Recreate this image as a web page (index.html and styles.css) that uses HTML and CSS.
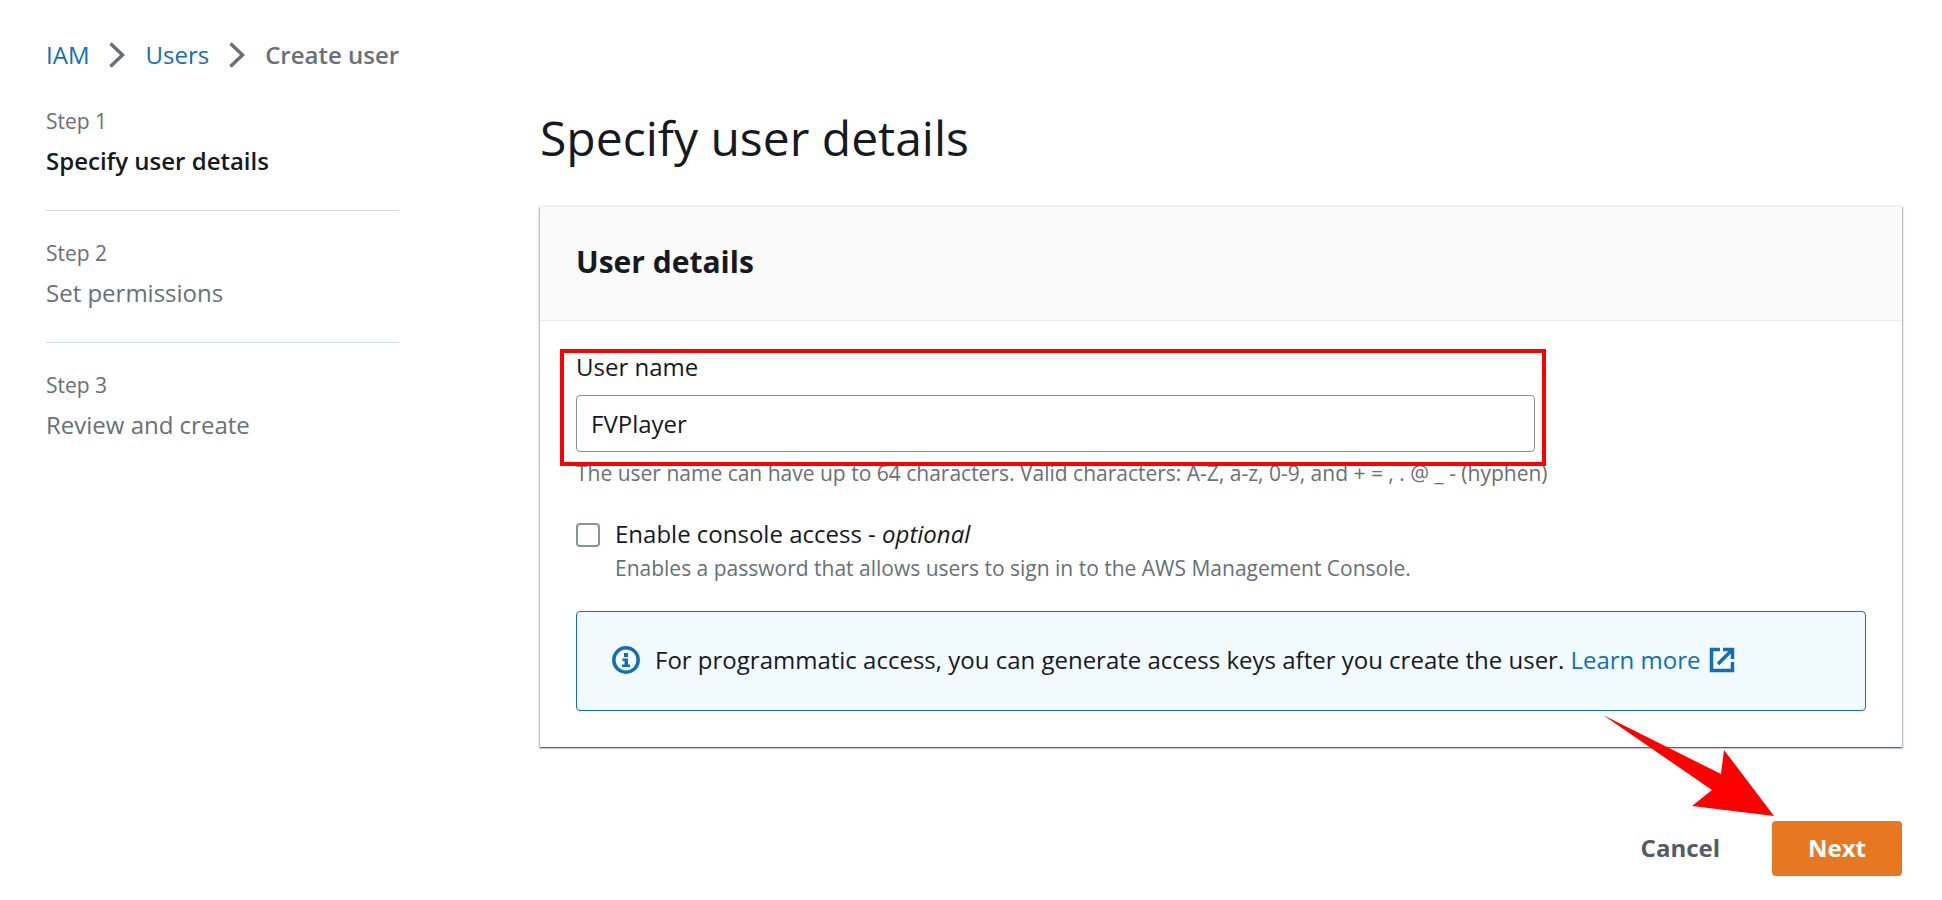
FILE: index.html
```html
<!DOCTYPE html>
<html lang="en">
<head>
    <meta charset="UTF-8">
    <meta name="viewport" content="width=device-width, initial-scale=1.0">
    <title>Create user</title>
    <link rel="stylesheet" href="styles.css">
</head>
<body>
    <nav class="breadcrumb" aria-label="Breadcrumb">
        <a href="#">IAM</a>
        <svg class="chevron" viewBox="0 0 16 26"><path d="M1.5 1.5 L13.5 13 L1.5 24.5"/></svg>
        <a href="#">Users</a>
        <svg class="chevron" viewBox="0 0 16 26"><path d="M1.5 1.5 L13.5 13 L1.5 24.5"/></svg>
        <span class="current">Create user</span>
    </nav>

    <div class="wizard">
        <ol class="steps">
            <li class="step active">
                <span class="step-number">Step 1</span>
                <span class="step-name">Specify user details</span>
            </li>
            <li class="step">
                <span class="step-number">Step 2</span>
                <span class="step-name">Set permissions</span>
            </li>
            <li class="step">
                <span class="step-number">Step 3</span>
                <span class="step-name">Review and create</span>
            </li>
        </ol>

        <main class="content">
            <h1>Specify user details</h1>
            <form id="createUser">
                <section class="card">
                    <header class="card-header">
                        <h2>User details</h2>
                    </header>
                    <div class="card-body">
                        <div class="field">
                            <label for="userName">User name</label>
                            <input type="text" name="userName" id="userName" value="FVPlayer" aria-describedby="userNameHint">
                            <div class="highlight"></div>
                        </div>
                        <p class="hint" id="userNameHint">The user name can have up to 64 characters. Valid characters: A-Z, a-z, 0-9, and + = , . @ _ - (hyphen)</p>

                        <div class="check">
                            <input type="checkbox" name="console" id="console">
                            <div>
                                <label for="console">Enable console access - <em>optional</em></label>
                                <p class="hint">Enables a password that allows users to sign in to the AWS Management Console.</p>
                            </div>
                        </div>

                        <div class="info">
                            <svg class="info-icon" viewBox="0 0 28 28">
                                <circle cx="14" cy="14" r="12.2"/>
                                <path d="M12 7h4v4h-4z M10.5 12.5h5.5v6h2v2.5h-8v-2.5h2.500v-3.500h-2z"/>
                            </svg>
                            <p>For programmatic access, you can generate access keys after you create the user.
                                <a href="#">Learn more<svg class="external" viewBox="0 0 26 26"><path d="M11 2.500H2.500v21h21V15M14 2.500h9.500V12M23 3L9 17"/></svg></a>
                            </p>
                        </div>
                    </div>
                </section>

                <div class="actions">
                    <button type="button" class="cancel">Cancel</button>
                    <button type="submit" class="next">Next</button>
                    <svg class="arrow" viewBox="0 0 172 102"><path d="M0 0L118 59L121 35L171 101L89 91L109 75Z"/></svg>
                </div>
            </form>
        </main>
    </div>
</body>
</html>
```
FILE: styles.css
```css
*{
    box-sizing: border-box;
}

body{
    margin: 0;
    padding: 37px 40px 24px 46px;
    background-color: #fff;
    color: #16191f;
    font-family: "Open Sans", "Noto Sans", sans-serif;
    font-size: 24px;
    line-height: 36px;
}

h1, h2, p, ol{
    margin: 0;
    padding: 0;
}

a{
    color: #146eb4;
    text-decoration: none;
}

a:hover{
    text-decoration: underline;
}

/* Breadcrumb */
.breadcrumb{
    display: flex;
    align-items: center;
    gap: 20px;
}

.chevron{
    width: 16px;
    height: 26px;
    fill: none;
    stroke: #687078;
    stroke-width: 3.5;
}

.current{
    color: #687078;
    font-weight: 600;
}

/* Wizard steps */
.wizard{
    display: flex;
    gap: 141px;
    margin-top: 32px;
}

.steps{
    flex: 0 0 353px;
    list-style: none;
}

.step{
    display: flex;
    flex-direction: column;
    gap: 6px;
    padding-bottom: 31px;
    margin-bottom: 26px;
    border-bottom: 1px solid #d5dbdb;
    color: #687078;
}

.step:last-child{
    border-bottom: none;
}

.step-number{
    font-size: 21px;
    line-height: 32px;
}

.active .step-name{
    color: #16191f;
    font-weight: 600;
}

.content{
    flex: 1;
}

h1{
    font-size: 48px;
    font-weight: 400;
    line-height: 66px;
    margin-bottom: 35px;
}

/* Form card */
.card{
    border-top: 1px solid #eaeded;
    box-shadow: 0 1px 1px 0 rgba(0,28,36,0.5), 1px 1px 2px 0 rgba(0,28,36,0.25), -1px 1px 2px 0 rgba(0,28,36,0.25);
}

.card-header{
    padding: 35px 36px 38px;
    background-color: #fafafa;
    border-bottom: 1px solid #eaeded;
}

h2{
    font-size: 30px;
    font-weight: 700;
    line-height: 40px;
}

.card-body{
    padding: 28px 36px 36px;
}

.field{
    position: relative;
    width: 959px;
    max-width: 100%;
}

.field label{
    display: block;
    margin-bottom: 10px;
}

input[type = "text"]{
    display: block;
    width: 100%;
    height: 57px;
    padding: 0 14px;
    border: 1px solid #879596;
    border-radius: 4px;
    color: #16191f;
    font: inherit;
}

/* Red frame round the user name */
.highlight{
    position: absolute;
    inset: 0 -11px -14px -16px;
    border: 4px solid #ff0000;
    pointer-events: none;
}

.hint{
    color: #687078;
    font-size: 21px;
    line-height: 32px;
}

.field + .hint{
    margin: 5px 0 27px;
}

.check{
    display: flex;
    gap: 15px;
    margin-bottom: 27px;
}

input[type = "checkbox"]{
    appearance: none;
    flex: none;
    width: 24px;
    height: 24px;
    margin: 7px 0 0;
    border: 2px solid #879596;
    border-radius: 4px;
    background-color: #fff;
}

input[type = "checkbox"]:checked{
    background-color: #146eb4;
}

.info{
    display: flex;
    align-items: center;
    gap: 15px;
    padding: 30px 35px 32px;
    background-color: #f1faff;
    border: 1px solid #146eb4;
    border-radius: 4px;
}

.info-icon{
    flex: none;
    width: 28px;
    height: 28px;
    fill: #146eb4;
}

.info-icon circle{
    fill: none;
    stroke: #146eb4;
    stroke-width: 3.5;
}

.external{
    width: 26px;
    height: 26px;
    margin-left: 8px;
    vertical-align: -4px;
    fill: none;
    stroke: #146eb4;
    stroke-width: 3.5;
}

/* Buttons */
.actions{
    position: relative;
    display: flex;
    justify-content: flex-end;
    gap: 16px;
    margin-top: 74px;
}

button{
    height: 55px;
    padding: 0 36px 2px;
    border: none;
    border-radius: 4px;
    font: inherit;
    font-weight: 700;
    cursor: pointer;
}

.cancel{
    background-color: transparent;
    color: #545b64;
}

.next{
    background-color: #e87722;
    color: #fff;
}

.arrow{
    position: absolute;
    right: 127px;
    bottom: 59px;
    width: 172px;
    height: 102px;
    fill: #ff0000;
}
```
